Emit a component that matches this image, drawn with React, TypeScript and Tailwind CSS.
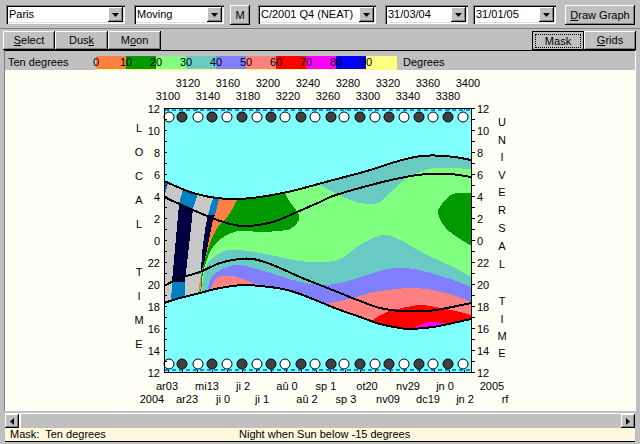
type Pt = [number, number];

const font = "font-['Liberation_Sans',Arial,sans-serif] text-[11px] text-black";
const raised =
  "shadow-[inset_-1px_-1px_#000,inset_1px_1px_#fff,inset_-2px_-2px_#808080]";
const sunken =
  "shadow-[inset_1px_1px_#808080,inset_2px_2px_#000,inset_-1px_-1px_#fff,inset_-2px_-2px_#dfdfdf]";

// Catmull-Rom through the points, so the measured curves stay smooth
function segs(p: Pt[]) {
  let d = "";
  for (let i = 0; i < p.length - 1; i++) {
    const a = p[Math.max(i - 1, 0)];
    const b = p[i];
    const c = p[i + 1];
    const e = p[Math.min(i + 2, p.length - 1)];
    const c1x = b[0] + (c[0] - a[0]) / 6;
    const c1y = b[1] + (c[1] - a[1]) / 6;
    const c2x = c[0] - (e[0] - b[0]) / 6;
    const c2y = c[1] - (e[1] - b[1]) / 6;
    d += ` C${c1x} ${c1y} ${c2x} ${c2y} ${c[0]} ${c[1]}`;
  }
  return d;
}
const open = (p: Pt[]) => `M${p[0][0]} ${p[0][1]}` + segs(p);
const below = (p: Pt[], y = 340) =>
  `${open(p)} L${p[p.length - 1][0]} ${y} L${p[0][0]} ${y} Z`;
const poly = (p: Pt[]) => p.map((q) => q.join(",")).join(" ");

const line1: Pt[] = [[164, 181], [180, 188], [193, 193], [210, 197], [227, 199], [240, 199], [260, 197], [283, 193], [300, 189], [333, 180], [367, 171], [395, 162], [415, 157], [430, 155.5], [445, 156], [458, 157.5], [471, 160]];
const line2: Pt[] = [[164, 197], [193, 210], [220, 221], [240, 226], [250, 226], [273, 222], [297, 212], [320, 202], [333, 196], [367, 186], [400, 178], [427, 174], [450, 174], [471, 177]];
const line3: Pt[] = [[164, 286], [180, 278], [200, 272], [220, 263], [240, 259], [253, 259], [273, 265], [300, 277], [320, 285], [340, 293], [360, 301], [380, 308], [400, 311], [427, 311], [447, 308], [471, 303]];
const line4: Pt[] = [[164, 303], [180, 298], [200, 293], [220, 288], [243, 285], [260, 286], [283, 289], [300, 294], [320, 302], [340, 310], [360, 317], [380, 324], [400, 328], [410, 329], [433, 327], [453, 323], [471, 319]];

const orangeRight: Pt[] = [[240, 190], [237, 200], [233, 208], [225, 220], [218, 227], [212, 238], [208, 250], [204, 260], [202, 270], [201, 283], [200, 296]];
const orangeLeft: Pt[] = [[221, 190], [219, 199], [215, 215], [213, 220], [207, 250], [203, 267], [200, 280], [198, 296]];
const greenEdge: Pt[] = [[283, 190], [290, 202], [298, 213], [299, 220], [293, 227], [287, 230], [263, 232], [240, 231], [227, 235], [217, 242], [210, 252], [207, 260], [203, 272], [202, 283], [200, 296]];
const teal: Pt[] = [[201, 300], [203, 280], [208, 263], [217, 255], [227, 250], [240, 250], [260, 253], [280, 257], [300, 261], [320, 262], [340, 259], [363, 243], [383, 235], [400, 240], [427, 255], [453, 267], [471, 277]];
const violet: Pt[] = [[206, 300], [210, 280], [217, 272], [227, 267], [240, 265], [260, 270], [280, 276], [300, 282], [320, 285], [340, 283], [367, 275], [387, 269], [407, 268], [427, 272], [453, 280], [471, 287]];
const salmonL: Pt[] = [[208, 296], [215, 280], [223, 276], [237, 277], [250, 282], [260, 285], [268, 290]];
const salmonR: Pt[] = [[325, 305], [330, 303], [353, 298], [370, 293], [387, 290], [413, 288], [433, 290], [453, 295], [471, 302]];
const red: Pt[] = [[373, 320], [387, 312], [407, 307], [423, 305], [440, 308], [460, 312], [471, 315]];
const magenta: Pt[] = [[408, 332], [420, 325], [430, 322], [443, 323], [453, 325], [464, 322]];
const tealBlob: Pt[] = [[320, 185], [333, 192], [350, 200], [367, 204], [380, 202], [393, 190], [407, 178], [420, 172], [433, 168], [450, 168], [471, 169]];
const greenBlob: Pt[] = [[478, 193], [457, 193], [447, 198], [440, 207], [438, 213], [442, 223], [450, 232], [460, 239], [478, 250]];

const clip =
  open(line1) +
  ` L471 319` +
  segs([...line4].reverse()) +
  " Z";

const centres = [169, 182, 198, 212, 227, 242, 257, 271, 285, 301, 315, 331, 344, 360, 375, 389, 404, 419, 433, 448, 463];
const hours = ["12", "10", "8", "6", "4", "2", "0", "22", "20", "18", "16", "14", "12"];
const legend = [
  ["0", "bg-[#ff8040]"],
  ["10", "bg-[#009900]"],
  ["20", "bg-[#80ff80]"],
  ["30", "bg-[#69c9c3]"],
  ["40", "bg-[#8080ff]"],
  ["50", "bg-[#ff8080]"],
  ["60", "bg-[#ff0000]"],
  ["70", "bg-[#ff00ff]"],
  ["80", "bg-[#0000ff]"],
  ["90", "bg-[#ffff80]"],
];
const topRow = [[3120, 188], [3160, 228], [3200, 268], [3240, 308], [3280, 348], [3320, 388], [3360, 428], [3400, 468]];
const topRow2 = [[3100, 168], [3140, 208], [3180, 248], [3220, 288], [3260, 328], [3300, 368], [3340, 408], [3380, 448]];
const dates1: [string, number][] = [["ar03", 167], ["mi13", 207], ["ji 2", 243], ["aû 0", 287], ["sp 1", 326], ["ot20", 367], ["nv29", 408], ["jn 0", 445], ["2005", 492]];
const dates2: [string, number][] = [["2004", 152], ["ar23", 187], ["ji 0", 223], ["ji 1", 262], ["aû 2", 307], ["sp 3", 346], ["nv09", 388], ["dc19", 428], ["jn 2", 465], ["rf", 505]];
const leftWord: [string, number][] = [["L", 128], ["O", 152], ["C", 176], ["A", 200], ["L", 224], ["T", 272], ["I", 296], ["M", 320], ["E", 344]];
const rightWord: [string, number][] = [["U", 122], ["N", 140], ["I", 157], ["V", 175], ["E", 192], ["R", 210], ["S", 228], ["A", 246], ["L", 264], ["T", 301], ["I", 319], ["M", 336], ["E", 353]];

function Combo({ text, w, ml }: { text: string; w: string; ml: string }) {
  return (
    <div className={`${w} ${ml} h-[19px] bg-white ${sunken} flex items-center pl-[3px] pr-[2px] shrink-0`}>
      <span className="flex-1 whitespace-pre">{text}</span>
      <div className={`w-[15px] h-[15px] bg-[#c0c0c0] ${raised} flex items-center justify-center`}>
        <svg width="7" height="4" viewBox="0 0 7 4"><path d="M0 0h7L3.5 4z" fill="#000" /></svg>
      </div>
    </div>
  );
}

function Btn({ children, w, extra = "" }: { children: React.ReactNode; w: string; extra?: string }) {
  return (
    <div className={`${w} ${extra} bg-[#c0c0c0] ${raised} flex items-center justify-center shrink-0`}>
      {children}
    </div>
  );
}

function Chart() {
  return (
    <svg viewBox="5 70 631 341" width="631" height="341" shapeRendering="crispEdges" className="block">
      <rect x="164" y="108" width="307" height="264" fill="#80ffff" />
      <clipPath id="band"><path d={clip} /></clipPath>
      <g clipPath="url(#band)">
        <rect x="160" y="150" width="320" height="190" fill="#80ff80" />
        <path d={`${open(tealBlob)} L471 150 L320 150 Z`} fill="#69c9c3" />
        <path d={open(greenBlob) + " Z"} fill="#009900" />
        <path d={`M237 190 L283 190${segs(greenEdge)} L200 296${segs([...orangeRight].reverse())} Z`} fill="#009900" />
        <path d={below(teal)} fill="#69c9c3" />
        <path d={below(violet)} fill="#8080ff" />
        <path d={below(salmonL)} fill="#ff8080" />
        <path d={below(salmonR)} fill="#ff8080" />
        <path d={below(red)} fill="#ff0000" />
        <path d={below(magenta)} fill="#ff00ff" />
        <polygon points={poly([[160, 170], [224, 170], ...orangeLeft, [160, 310]])} fill="#c8c8c8" />
        <path d={`${open(orangeLeft)} L200 296${segs([...orangeRight].reverse())} Z`} fill="#ff8040" />
        <polygon points={poly([[160, 175], [169, 175], [167, 188], [165, 194], [160, 194]])} fill="#0080c0" />
        <polygon points={poly([[186, 175], [203, 175], [198, 194], [193, 209], [179, 204], [183, 189]])} fill="#0080c0" />
        <polygon points={poly([[179, 204], [193, 209], [185, 282], [172, 282]])} fill="#000040" />
        <polygon points={poly([[172, 282], [185, 282], [185, 305], [171, 305]])} fill="#0080c0" />
        <polygon points={poly([[216, 175], [222, 175], [219, 199], [215, 215], [208, 215], [213, 198]])} fill="#0080c0" />
        <polygon points={poly([[208, 215], [215, 215], [213, 220], [207, 250], [203, 267], [201, 272], [202, 253], [205, 230]])} fill="#000040" />
      </g>

      {/* dashed strips and moon phases */}
      <line x1="165" y1="110" x2="471" y2="110" stroke="#0090ff" strokeWidth="2" strokeDasharray="4 3" />
      <line x1="165" y1="370" x2="471" y2="370" stroke="#0090ff" strokeWidth="2" strokeDasharray="4 3" />
      {centres.map((x, i) => (
        <g key={x} fill={i % 2 ? "#404040" : "#fff"} stroke="#000" shapeRendering="auto">
          <circle cx={x} cy="117" r="5" />
          <circle cx={x} cy="364" r="5" />
        </g>
      ))}

      {/* dusk lines */}
      {[line1, line2, line3, line4].map((l, i) => (
        <path key={i} d={open(l)} fill="none" stroke="#000" strokeWidth="2" />
      ))}

      {/* frame and ticks */}
      <rect x="164" y="108" width="307" height="264" fill="none" stroke="#000" />
      {Array.from({ length: 25 }, (_, i) => 108 + i * 11).map((y) => (
        <g key={y}>
          <line x1="164" y1={y} x2="167" y2={y} stroke="#000" />
          <line x1="471" y1={y} x2="475" y2={y} stroke="#000" />
        </g>
      ))}
      {Array.from({ length: 21 }, (_, i) => 168 + i * 14.8).map((x) => (
        <g key={x}>
          <line x1={x} y1="108" x2={x} y2="110" stroke="#000" />
          <line x1={x} y1="370" x2={x} y2="372" stroke="#000" />
        </g>
      ))}

      {/* labels */}
      <g className="font-['Liberation_Sans',Arial,sans-serif] text-[11px]" fill="#000" textAnchor="middle">
        {topRow.map(([t, x]) => <text key={t} x={x} y="87">{t}</text>)}
        {topRow2.map(([t, x]) => <text key={t} x={x} y="100">{t}</text>)}
        {dates1.map(([t, x]) => <text key={t} x={x} y="390">{t}</text>)}
        {dates2.map(([t, x]) => <text key={t} x={x} y="403">{t}</text>)}
        {leftWord.map(([t, y], i) => <text key={i} x="139" y={y + 4}>{t}</text>)}
        {rightWord.map(([t, y], i) => <text key={i} x="502" y={y + 4}>{t}</text>)}
        {hours.map((h, i) => <text key={i} x="160" y={113 + i * 22} textAnchor="end">{h}</text>)}
        {hours.map((h, i) => <text key={i} x="477" y={113 + i * 22} textAnchor="start">{h}</text>)}
      </g>
    </svg>
  );
}

export default function App() {
  return (
    <div className={`${font} w-[640px] h-[444px] overflow-hidden bg-[#c0c0c0] flex flex-col`}>
      {/* top toolbar */}
      <div className="h-[29px] pt-[5px] pl-[6px] flex items-start border-b border-b-[#808080] shrink-0">
        <Combo text="Paris" w="w-[119px]" ml="" />
        <Combo text="Moving" w="w-[90px]" ml="ml-[9px]" />
        <Btn w="w-[20px]" extra="h-[20px] ml-[6px]">M</Btn>
        <Combo text="C/2001 Q4 (NEAT)" w="w-[118px]" ml="ml-[8px]" />
        <Combo text="31/03/04" w="w-[83px]" ml="ml-[9px]" />
        <Combo text="31/01/05" w="w-[83px]" ml="ml-[5px]" />
        <Btn w="w-[70px]" extra="h-[20px] ml-[9px]"><span><u>D</u>raw Graph</span></Btn>
      </div>

      {/* second toolbar */}
      <div className="h-[21px] pt-[2px] pl-[3px] pr-[4px] flex shrink-0">
        <Btn w="w-[52px]"><span><u>S</u>elect</span></Btn>
        <Btn w="w-[53px]"><span>Dus<u>k</u></span></Btn>
        <Btn w="w-[53px]"><span>M<u>o</u>on</span></Btn>
        <div className="flex-1" />
        <div className="w-[52px] bg-[#c0c0c0] border border-black flex items-center justify-center shrink-0">
          <span className="w-[46px] h-[14px] border border-dotted border-black leading-[12px] text-center">Mask</span>
        </div>
        <Btn w="w-[52px]"><span><u>G</u>rids</span></Btn>
      </div>

      {/* main panel */}
      <div className="mx-[4px] border-t border-t-black border-l border-l-[#808080] border-r border-r-white flex flex-col shrink-0">
        <div className="h-[19px] pt-[5px] flex items-start shrink-0">
          <span className="ml-[3px] w-[88px] leading-[13px]">Ten degrees</span>
          <div className="flex h-[14px] border-b border-b-[#ffff80]">
            {legend.map(([n, c], i) => (
              <div key={n} className={`${i === 9 ? "w-[31px]" : "w-[30px]"} ${c} leading-[13px] whitespace-nowrap`}>
                <span className={i === 0 ? "relative left-[-3px]" : "relative left-[-6px]"}>{n}</span>
              </div>
            ))}
          </div>
          <span className="ml-[6px] leading-[13px]">Degrees</span>
        </div>
        <div className="bg-[#fffff5] h-[341px]">
          <Chart />
        </div>
      </div>

      {/* horizontal scroll bar */}
      <div className="h-[15px] mx-[5px] mt-[2px] flex bg-[#c0c0c0] border-t border-t-white shrink-0">
        <div className={`w-[14px] ${raised} flex items-center justify-center shrink-0`}>
          <svg width="4" height="7" viewBox="0 0 4 7"><path d="M4 0v7L0 3.5z" fill="#000" /></svg>
        </div>
        <div className="flex-1 border-l-2 border-l-white" />
        <div className={`w-[14px] ml-[2px] ${raised} flex items-center justify-center shrink-0`}>
          <svg width="4" height="7" viewBox="0 0 4 7"><path d="M0 0v7L4 3.5z" fill="#000" /></svg>
        </div>
      </div>

      {/* status bar */}
      <div className="h-[14px] mx-[5px] bg-[#fff8dc] border-b border-b-black flex items-center shrink-0">
        <span className="ml-[5px] w-[229px] whitespace-pre">Mask:  Ten degrees</span>
        <span>Night when Sun below -15 degrees</span>
      </div>
    </div>
  );
}
